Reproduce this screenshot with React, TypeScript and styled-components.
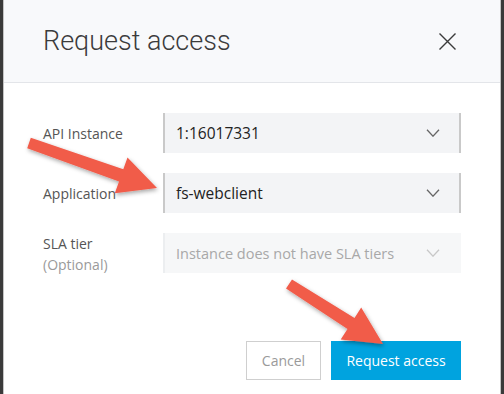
import styled, { createGlobalStyle } from "styled-components";

const GlobalStyle = createGlobalStyle`
  html, body {
    margin: 0;
    padding: 0;
    background: #3a3a3a;
  }
  * {
    box-sizing: border-box;
  }
`;

const Page = styled.div`
  position: relative;
  width: 504px;
  height: 394px;
  padding: 0 3px;
  background: #3a3a3a;
  overflow: hidden;
`;

const Modal = styled.div`
  height: 100%;
  display: flex;
  flex-direction: column;
  background: #ffffff;
  border-left: 1px solid #c4c4c4;
  border-right: 1px solid #c4c4c4;
`;

const Header = styled.div`
  height: 83px;
  flex: none;
  display: flex;
  align-items: center;
  justify-content: space-between;
  padding: 0 43px 0 39px;
  background: #f8f9fb;
  border-bottom: 1px solid #e3e5e9;
`;

const Title = styled.h1`
  margin: 0;
  font-family: Roboto, "Liberation Sans", sans-serif;
  font-weight: 300;
  font-size: 27px;
  color: #3b3b3b;
`;

const CloseButton = styled.button`
  width: 19px;
  height: 19px;
  padding: 0;
  border: none;
  background: none;
  display: flex;
  cursor: pointer;
`;

const Body = styled.div`
  flex: 1;
  display: flex;
  flex-direction: column;
  padding: 30px 40px 0 39px;
`;

const Form = styled.div`
  display: grid;
  grid-template-columns: 120px 298px;
  row-gap: 20px;
`;

const Label = styled.div<{ $top?: boolean }>`
  align-self: ${(p) => (p.$top ? "start" : "center")};
  font-family: "Open Sans", sans-serif;
  font-size: 14px;
  line-height: 21px;
  color: #555555;
`;

const Hint = styled.div`
  color: #9a9a9a;
`;

const Select = styled.div<{ $disabled?: boolean }>`
  height: 40px;
  display: flex;
  align-items: center;
  justify-content: space-between;
  padding: 0 19px 0 11px;
  background: ${(p) => (p.$disabled ? "#f6f7f8" : "#f3f4f6")};
  border-left: 2px solid ${(p) => (p.$disabled ? "#eceef0" : "#c9c9c9")};
  border-right: 2px solid ${(p) => (p.$disabled ? "#f6f7f8" : "#c9c9c9")};
  font-family: "Open Sans", sans-serif;
  font-size: ${(p) => (p.$disabled ? "14.5px" : "15.5px")};
  color: ${(p) => (p.$disabled ? "#a8a8a8" : "#222222")};
`;

const Footer = styled.div`
  display: flex;
  justify-content: flex-end;
  gap: 10px;
  margin-top: 66px;
  width: 418px;
`;

const Button = styled.button<{ $primary?: boolean }>`
  height: 39px;
  width: ${(p) => (p.$primary ? "130px" : "75px")};
  padding: 0;
  border: 1px solid ${(p) => (p.$primary ? "#00a3df" : "#cfcfcf")};
  background: ${(p) => (p.$primary ? "#00a3df" : "#ffffff")};
  color: ${(p) => (p.$primary ? "#ffffff" : "#9a9a9a")};
  font-family: "Open Sans", sans-serif;
  font-size: 14px;
  cursor: pointer;
`;

const Overlay = styled.svg`
  position: absolute;
  left: 0;
  top: 0;
  pointer-events: none;
`;

function Chevron({ color }: { color: string }) {
  return (
    <svg width="14" height="8" viewBox="0 0 14 8">
      <path d="M1 0.8 L7 7.2 L13 0.8" fill="none" stroke={color} strokeWidth="1.3" />
    </svg>
  );
}

function arrowPoints(
  tx: number,
  ty: number,
  hx: number,
  hy: number,
  tail: number,
  shaft: number,
  headLen: number,
  headHalf: number,
) {
  const dx = hx - tx;
  const dy = hy - ty;
  const len = Math.hypot(dx, dy);
  const ux = dx / len;
  const uy = dy / len;
  const nx = -uy;
  const ny = ux;
  const bx = hx - ux * headLen;
  const by = hy - uy * headLen;
  const pts = [
    [tx + nx * tail, ty + ny * tail],
    [bx + nx * shaft, by + ny * shaft],
    [bx + nx * headHalf, by + ny * headHalf],
    [hx, hy],
    [bx - nx * headHalf, by - ny * headHalf],
    [bx - nx * shaft, by - ny * shaft],
    [tx - nx * tail, ty - ny * tail],
  ];
  return pts.map((p) => p.map((v) => v.toFixed(1)).join(",")).join(" ");
}

function Arrows() {
  return (
    <Overlay width="504" height="394" viewBox="0 0 504 394">
      <defs>
        <filter id="shadow" x="-20%" y="-20%" width="140%" height="140%">
          <feDropShadow dx="1" dy="2" stdDeviation="2" floodColor="#000" floodOpacity="0.35" />
        </filter>
      </defs>
      <g fill="#f15b4a" filter="url(#shadow)">
        <polygon points={arrowPoints(29, 143, 157, 188, 5.5, 6.5, 38, 19)} />
        <polygon points={arrowPoints(289, 284, 383, 344, 5.5, 6.5, 38, 19)} />
      </g>
    </Overlay>
  );
}

export default function App() {
  return (
    <>
      <GlobalStyle />
      <Page>
        <Modal>
          <Header>
            <Title>Request access</Title>
            <CloseButton aria-label="Close">
              <svg width="19" height="19" viewBox="0 0 19 19">
                <path d="M1.5 1.5 L17.5 17.5 M17.5 1.5 L1.5 17.5" stroke="#3b3b3b" strokeWidth="1.4" />
              </svg>
            </CloseButton>
          </Header>
          <Body>
            <Form>
              <Label>API Instance</Label>
              <Select>
                <span>1:16017331</span>
                <Chevron color="#666666" />
              </Select>
              <Label>Application</Label>
              <Select>
                <span>fs-webclient</span>
                <Chevron color="#666666" />
              </Select>
              <Label $top>
                SLA tier
                <Hint>(Optional)</Hint>
              </Label>
              <Select $disabled>
                <span>Instance does not have SLA tiers</span>
                <Chevron color="#c8c8c8" />
              </Select>
            </Form>
            <Footer>
              <Button>Cancel</Button>
              <Button $primary>Request access</Button>
            </Footer>
          </Body>
        </Modal>
        <Arrows />
      </Page>
    </>
  );
}
